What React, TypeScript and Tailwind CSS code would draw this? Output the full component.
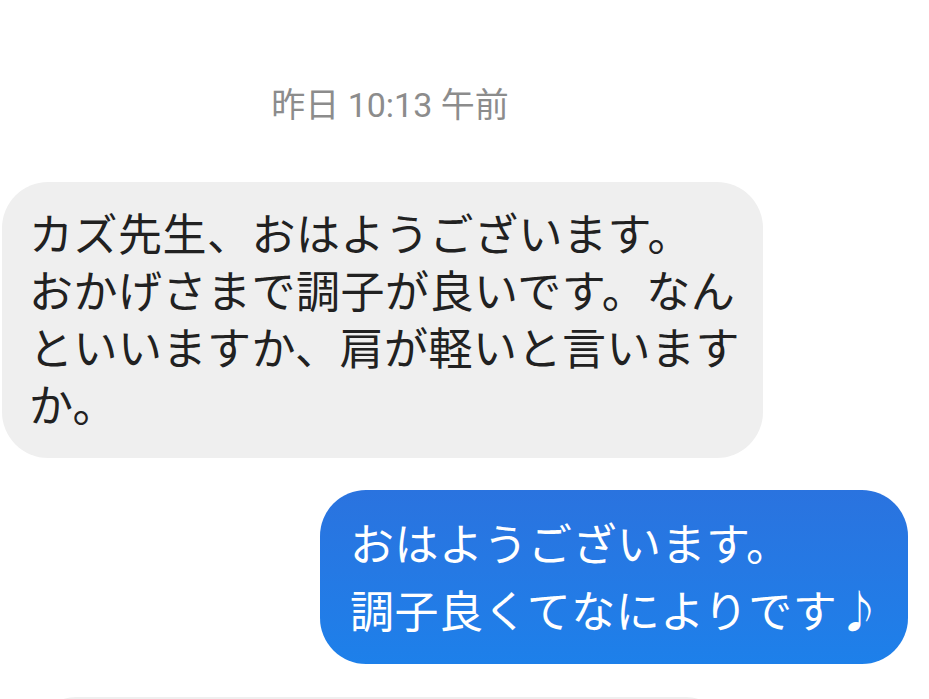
export default function App() {
  return (
    <div
      className="w-[929px] h-[699px] overflow-hidden bg-white"
      style={{ fontFamily: '"Noto Sans CJK JP", "Noto Sans", sans-serif' }}
    >
      <div className="pt-[83px] w-[780px] text-center text-[34px] leading-[44px] text-[#8c8c8c]" style={{ fontFamily: 'Roboto, "Noto Sans CJK JP", sans-serif' }}>
        昨日 10:13 午前
      </div>

      <div className="mt-[55px] ml-[2px] w-[761px] h-[276px] rounded-[46px] bg-[#efefef] pl-[27px] pt-[22px] text-[44px] leading-[57px] tracking-[0.5px] text-[#212121] whitespace-nowrap">
        カズ先生、おはようございます。
        <br />
        おかげさまで調子が良いです。なん
        <br />
        といいますか、肩が軽いと言います
        <br />
        か。
      </div>

      <div className="mt-[32px] flex justify-end pr-[21px]">
        <div className="w-[588px] h-[174px] rounded-[46px] bg-gradient-to-b from-[#2a73df] to-[#1d80ea] pl-[30px] pt-[19px] text-[44px] leading-[67px] tracking-[0.5px] text-white whitespace-nowrap">
          おはようございます。
          <br />
          調子良くてなによりです♪
        </div>
      </div>

      <div className="mt-[33px] ml-[36px] w-[690px] h-[40px] rounded-t-[40px] bg-[#efefef]" />
    </div>
  );
}
